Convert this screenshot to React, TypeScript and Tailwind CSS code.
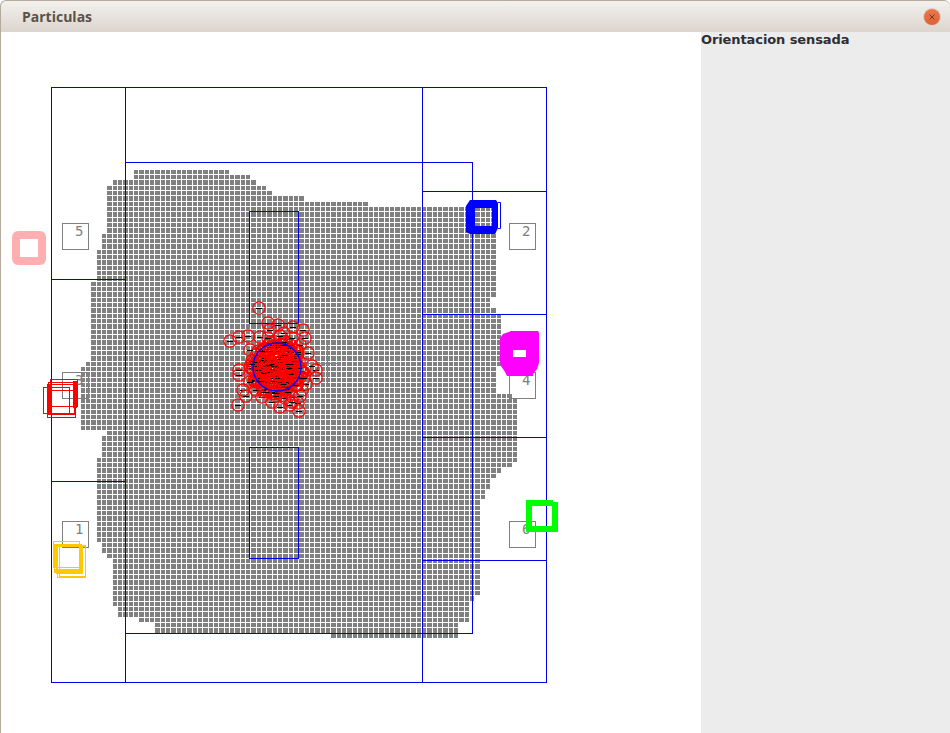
const outline: [number, number][] = [
  [132, 168], [185, 169], [205, 171], [230, 172], [250, 176], [257, 182], [265, 188], [270, 193],
  [280, 195], [298, 196], [320, 203], [420, 205], [499, 205], [499, 290], [493, 297], [493, 310],
  [501, 312], [501, 340], [499, 365], [495, 370], [495, 390], [500, 393], [510, 396], [517, 399],
  [517, 460], [510, 465], [492, 480], [483, 500], [479, 530], [479, 592], [471, 600], [468, 606],
  [468, 621], [459, 622], [459, 641], [330, 641], [330, 634], [153, 634], [153, 621], [138, 620],
  [117, 617], [114, 600], [114, 583], [111, 581], [111, 557], [104, 553], [104, 545], [95, 541],
  [95, 480], [103, 440], [105, 432], [79, 430], [79, 375], [85, 365], [93, 350], [93, 280],
  [96, 278], [100, 237], [108, 230], [108, 183], [132, 181],
];

function inside(x: number, y: number) {
  let hit = false;
  for (let i = 0, j = outline.length - 1; i < outline.length; j = i++) {
    const [xi, yi] = outline[i];
    const [xj, yj] = outline[j];
    if (yi > y !== yj > y && x < ((xj - xi) * (y - yi)) / (yj - yi) + xi) hit = !hit;
  }
  return hit;
}

function gridPath() {
  const pitch = 16 / 3;
  let d = "";
  for (let row = 0; row < 92; row++) {
    const top = Math.round(164.3 + row * pitch);
    const bottom = Math.round(164.3 + (row + 1) * pitch) - 1;
    for (let col = 0; col < 86; col++) {
      const left = Math.round(75.33 + col * pitch);
      const right = Math.round(75.33 + (col + 1) * pitch) - 1;
      if (inside((left + right) / 2, (top + bottom) / 2)) {
        d += `M${left} ${top}H${right}V${bottom}H${left}Z`;
      }
    }
  }
  return d;
}

// particles: a dense core first, the stragglers read off the picture on top
const stragglers: [number, number][] = [
  [259, 308], [230, 341], [239, 337], [248, 336], [238, 405], [299, 411], [316, 370], [316, 378],
  [239, 370], [239, 375], [268, 323], [278, 325], [293, 327], [303, 330], [305, 338], [308, 353],
  [280, 407], [290, 405], [243, 390], [260, 337], [250, 350], [262, 397], [302, 390], [293, 397],
  [270, 330], [284, 333], [300, 345], [312, 366], [306, 384], [285, 398], [272, 402], [250, 382],
  [246, 396], [296, 385], [298, 403], [288, 392], [300, 396], [292, 402], [304, 378], [268, 338],
  [280, 336], [292, 338], [298, 352], [256, 390], [264, 392], [276, 396],
];

function particles() {
  const list: [number, number][] = [];
  let seed = 17;
  const next = () => {
    seed = (seed * 9301 + 49297) % 233280;
    return seed / 233280;
  };
  for (let i = 0; i < 170; i++) {
    const a = next() * Math.PI * 2;
    const r = Math.sqrt(next()) * 27;
    list.push([277 + Math.cos(a) * r, 367 + Math.sin(a) * r]);
  }
  return [...list, ...stragglers];
}

const blueLines = [
  "M51.5 87.5H546.5V682.5H51.5Z",
  "M125.5 87.5V682.5M422.5 87.5V682.5",
  "M51.5 279.5H125.5M51.5 481.5H125.5",
  "M422.5 191.5H546.5M422.5 314.5H546.5M422.5 437.5H546.5M422.5 560.5H546.5",
  "M125.5 162.5H472.5V633.5H125.5Z",
  "M249.5 211.5H298.5V323.5H249.5Z",
  "M249.5 447.5H298.5V558.5H249.5Z",
];

const beacons = [
  { x: 62, y: 223, label: "5" },
  { x: 62, y: 372, label: "3" },
  { x: 62, y: 521, label: "1" },
  { x: 509, y: 223, label: "2" },
  { x: 509, y: 372, label: "4" },
  { x: 509, y: 521, label: "6" },
];

const redBoxes = [
  [43, 387, 26, 26], [50, 379, 27, 27], [47, 384, 27, 30], [47, 390, 28, 27], [48, 382, 26, 31],
];
const redBars = [
  [47, 384, 5, 30], [73, 381, 4, 27],
];
const yellowBoxes = [
  [53, 541, 26, 26], [54, 544, 27, 27], [56, 545, 26, 28], [57, 546, 28, 31], [59, 545, 26, 31],
];
const yellowBars = [
  [53, 544, 3, 24], [79, 544, 3, 28], [54, 569, 28, 4],
];

export default function App() {
  return (
    <div className="flex h-[733px] w-[950px] flex-col overflow-hidden bg-white font-['Liberation_Sans',sans-serif]">
      <div className="flex h-8 shrink-0 items-center justify-between rounded-t-[6px] border-t border-l border-[#b5a99b] bg-gradient-to-b from-[#f3f1ee] to-[#dcd5ce] pr-[10px] pl-[21px]">
        <span className="font-['Open_Sans',sans-serif] text-[14px] font-bold text-[#5a5249]">Particulas</span>
        <div className="flex h-4 w-4 items-center justify-center rounded-full bg-gradient-to-b from-[#e8784e] to-[#e25f33] shadow-[0_0_0_1px_#d9cfc5]">
          <svg width="8" height="8" viewBox="0 0 8 8">
            <path d="M1.5 1.5L6.5 6.5M6.5 1.5L1.5 6.5" stroke="#7a3a22" strokeWidth="1" />
          </svg>
        </div>
      </div>
      <div className="flex min-h-0 flex-1">
        <div className="w-[701px] shrink-0 border-l border-[#b5a99b]">
          <svg width="700" height="701" viewBox="1 32 700 701" className="block">
            <path d={gridPath()} fill="#808080" shapeRendering="crispEdges" />

            {beacons.map((b) => (
              <g key={b.label}>
                <rect x={b.x + 0.5} y={b.y + 0.5} width="26" height="26" fill="none" stroke="#808080" />
                <text x={b.x + 13} y={b.y + 13} fontSize="14" fill="#808080" fontFamily="'DejaVu Sans Mono', monospace">
                  {b.label}
                </text>
              </g>
            ))}

            <path d={blueLines.join("")} fill="none" stroke="#0000e6" strokeWidth="1" shapeRendering="crispEdges" />

            {/* green crosshair */}
            <path d="M327.5 343V383M307 363.5H340" stroke="#00e000" fill="none" shapeRendering="crispEdges" />

            {particles().map(([x, y], i) => (
              <g key={i}>
                <path d={`M${x - 3} ${Math.round(y) + 0.5}H${x + 3}`} stroke="#000000" strokeWidth="1" />
                <circle cx={x} cy={y} r="6.2" fill="none" stroke="#ff0000" strokeWidth="1.2" />
              </g>
            ))}
            <circle cx="277" cy="367" r="24" fill="none" stroke="#0000ff" strokeWidth="1.5" />

            {/* robot estimates */}
            <rect x="16" y="235" width="26" height="26" rx="2" fill="none" stroke="#ffafaf" strokeWidth="8" />
            <rect x="20" y="240" width="18" height="16" fill="#ffffff" />

            {redBoxes.map(([x, y, w, h], i) => (
              <rect key={i} x={x + 0.5} y={y + 0.5} width={w} height={h} fill="none" stroke="#ff0000" />
            ))}
            {redBars.map(([x, y, w, h], i) => (
              <rect key={i} x={x} y={y} width={w} height={h} fill="#ff0000" />
            ))}
            {yellowBoxes.map(([x, y, w, h], i) => (
              <rect key={i} x={x + 0.5} y={y + 0.5} width={w} height={h} fill="none" stroke="#ffc800" />
            ))}
            {yellowBars.map(([x, y, w, h], i) => (
              <rect key={i} x={x} y={y} width={w} height={h} fill="#ffc800" />
            ))}

            <path
              fillRule="evenodd"
              d="M470 200H496L498 203V228L495 234H470L466 232V206ZM475 208V226H492V208Z"
              fill="#0000ff"
            />
            <path d="M498 202.5H500.5V228.5H498" fill="none" stroke="#0000ff" />

            <path
              fillRule="evenodd"
              d="M511 331H538L539 333V363L537 369L533 374V376H507L505 372L501 366L500 362V338L503 334ZM513 350V357H526V350Z"
              fill="#ff00ff"
            />

            <path fillRule="evenodd" d="M526 500H553V502H558V532H526ZM532 506V526H552V506Z" fill="#00ff00" />
          </svg>
        </div>
        <div className="flex-1 bg-[#ececec]">
          <p className="font-['DejaVu_Sans',sans-serif] text-[13px] leading-[15px] font-bold tracking-[-0.1px] text-[#2e2e33]">
            Orientacion sensada
          </p>
        </div>
      </div>
    </div>
  );
}
